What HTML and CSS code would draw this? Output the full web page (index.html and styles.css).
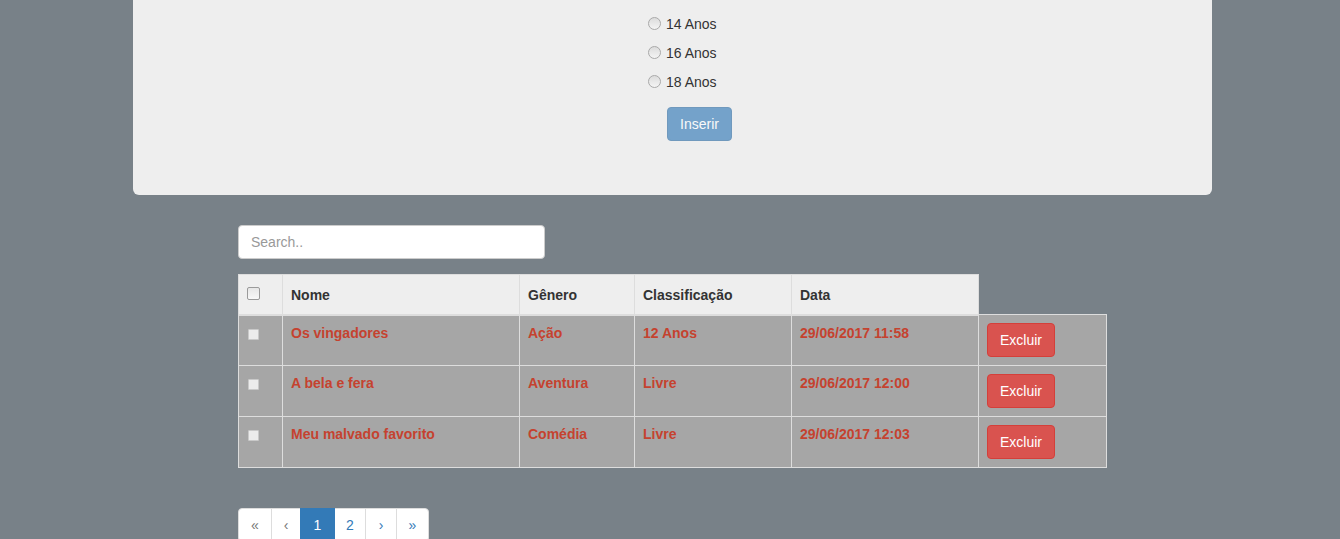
FILE: index.html
```html
<!DOCTYPE html>
<html lang="pt-BR">
<head>
<meta charset="utf-8">
<title>Filmes</title>
<link rel="stylesheet" href="styles.css">
</head>
<body>
<div class="panel">
  <div class="form-block">
    <label class="radio-row"><input type="radio" name="cls" class="radio"> 14 Anos</label>
    <label class="radio-row"><input type="radio" name="cls" class="radio"> 16 Anos</label>
    <label class="radio-row"><input type="radio" name="cls" class="radio"> 18 Anos</label>
    <div class="btn-row"><button class="btn btn-primary" disabled>Inserir</button></div>
  </div>
</div>

<div class="list">
  <input class="search" type="text" placeholder="Search..">
  <table class="grid">
    <thead>
      <tr>
        <th class="c-check"><input type="checkbox" class="chk-head"></th>
        <th class="c-nome">Nome</th>
        <th class="c-gen">Gênero</th>
        <th class="c-cls">Classificação</th>
        <th class="c-data">Data</th>
      </tr>
    </thead>
    <tbody>
      <tr>
        <td><input type="checkbox" class="chk-row" disabled></td>
        <td>Os vingadores</td>
        <td>Ação</td>
        <td>12 Anos</td>
        <td>29/06/2017 11:58</td>
        <td class="c-act"><button class="btn btn-danger">Excluir</button></td>
      </tr>
      <tr>
        <td><input type="checkbox" class="chk-row" disabled></td>
        <td>A bela e fera</td>
        <td>Aventura</td>
        <td>Livre</td>
        <td>29/06/2017 12:00</td>
        <td class="c-act"><button class="btn btn-danger">Excluir</button></td>
      </tr>
      <tr>
        <td><input type="checkbox" class="chk-row" disabled></td>
        <td>Meu malvado favorito</td>
        <td>Comédia</td>
        <td>Livre</td>
        <td>29/06/2017 12:03</td>
        <td class="c-act"><button class="btn btn-danger">Excluir</button></td>
      </tr>
    </tbody>
  </table>

  <ul class="pagination">
    <li class="pg disabled">«</li>
    <li class="pg disabled">‹</li>
    <li class="pg active">1</li>
    <li class="pg">2</li>
    <li class="pg">›</li>
    <li class="pg">»</li>
  </ul>
</div>
</body>
</html>
```

FILE: styles.css
```css
* { box-sizing: border-box; }

html, body {
  margin: 0;
  padding: 0;
}

body {
  background: #788188;
  font-family: "Liberation Sans", Arial, Helvetica, sans-serif;
  font-size: 14px;
  line-height: 20px;
  color: #333;
  height: 539px;
  overflow: hidden;
}

.panel {
  margin-left: 133px;
  width: 1079px;
  background: #eeeeee;
  border-radius: 0 0 6px 6px;
  padding: 14px 0 54px 515px;
}

.form-block {
  display: flex;
  flex-direction: column;
}

.radio-row {
  display: flex;
  align-items: center;
  height: 20px;
  margin-bottom: 9px;
  color: #333;
}

.radio {
  -webkit-appearance: none;
  appearance: none;
  width: 13px;
  height: 13px;
  margin: -2px 5px 0 0;
  border-radius: 50%;
  border: 1px solid #a9a9a9;
  background: linear-gradient(#dcdcdc, #f4f4f4);
}

.btn-row {
  padding-left: 19px;
  padding-top: 6px;
}

.btn {
  display: inline-block;
  height: 34px;
  padding: 6px 12px;
  font-family: inherit;
  font-size: 14px;
  line-height: 20px;
  border: 1px solid transparent;
  border-radius: 4px;
  color: #fff;
}

.btn-primary {
  background: #337ab7;
  border-color: #2e6da4;
  opacity: .65;
  width: 65px;
  padding: 6px 0;
  text-align: center;
}

.btn-danger {
  background: #d9534f;
  border-color: #d43f3a;
  width: 68px;
  padding: 6px 0;
  text-align: center;
}

.list {
  margin-left: 238px;
  padding-top: 30px;
}

.search {
  display: block;
  width: 307px;
  height: 34px;
  padding: 6px 12px;
  border: 1px solid #ccc;
  border-radius: 4px;
  background: #fff;
  font-family: inherit;
  font-size: 14px;
  color: #555;
  margin-bottom: 15px;
}

.search::placeholder { color: #999; }

.grid {
  border-collapse: collapse;
  width: 869px;
  table-layout: fixed;
}

.grid th, .grid td {
  border: 1px solid #dddddd;
  padding: 8px;
  text-align: left;
  line-height: 20px;
}

.grid th {
  background: #eeeeee;
  color: #333;
  font-weight: bold;
  height: 40px;
  vertical-align: bottom;
  padding-bottom: 9px;
  border-bottom-width: 2px;
}

.grid th.c-check { vertical-align: top; padding: 12px 8px 0 8px; }

.c-check { width: 44px; }
.c-nome { width: 237px; }
.c-gen { width: 115px; }
.c-cls { width: 157px; }
.c-data { width: 187px; }

.grid td {
  background: #a6a6a6;
  color: #c5422f;
  font-weight: bold;
  vertical-align: top;
  height: 51px;
  padding-top: 7px;
}

.grid td.c-act { font-weight: normal; padding-top: 8px; }

.chk-head {
  -webkit-appearance: none;
  appearance: none;
  display: block;
  width: 13px;
  height: 13px;
  margin: 0;
  border: 1px solid #9a9a9a;
  border-radius: 2px;
  background: linear-gradient(#e6e6e6, #f8f8f8);
}

.chk-row {
  -webkit-appearance: none;
  appearance: none;
  display: block;
  width: 11px;
  height: 11px;
  margin: 6px 0 0 1px;
  border: 1px solid #c9c9c9;
  border-radius: 1px;
  background: #ececec;
}

.pagination {
  display: flex;
  list-style: none;
  padding: 0;
  margin: 40px 0 0 0;
}

.pg {
  height: 34px;
  padding: 6px 0;
  text-align: center;
  background: #fff;
  border: 1px solid #ddd;
  margin-left: -1px;
  color: #337ab7;
  line-height: 20px;
}

.pg:nth-child(1) { width: 34px; margin-left: 0; border-radius: 4px 0 0 4px; }
.pg:nth-child(2) { width: 30px; }
.pg:nth-child(3) { width: 35px; }
.pg:nth-child(4) { width: 32px; }
.pg:nth-child(5) { width: 32px; }
.pg:nth-child(6) { width: 33px; border-radius: 0 4px 4px 0; }

.pg.disabled { color: #777; }

.pg.active {
  background: #337ab7;
  border-color: #337ab7;
  color: #fff;
  position: relative;
  z-index: 1;
}
```
